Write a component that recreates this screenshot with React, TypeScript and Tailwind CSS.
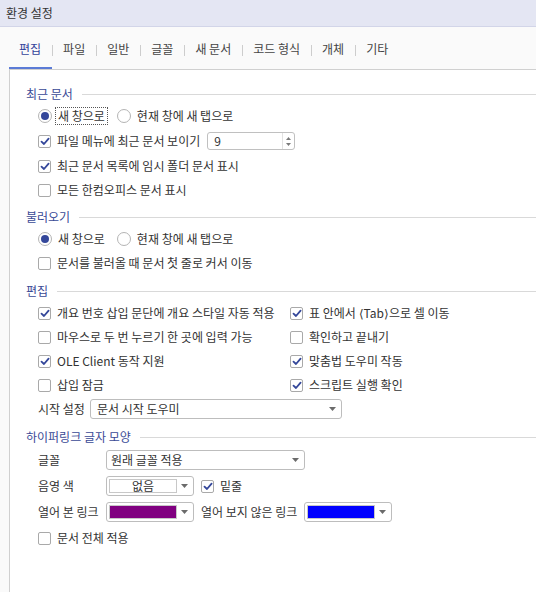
import React from "react";

const font = { fontFamily: '"Noto Sans CJK KR", "Noto Sans", sans-serif' };

function Check({ checked }: { checked?: boolean }) {
  return (
    <span className="w-[13px] h-[13px] shrink-0 border border-[#a9a9a9] rounded-[2px] bg-white flex items-center justify-center">
      {checked && (
        <svg width="10" height="9" viewBox="0 0 10 9">
          <path d="M1.5 4.6 L4 7 L8.6 1.6" fill="none" stroke="#34479a" strokeWidth="1.8" strokeLinecap="round" strokeLinejoin="round" />
        </svg>
      )}
    </span>
  );
}

function Radio({ checked }: { checked?: boolean }) {
  return (
    <span className="w-[14px] h-[14px] shrink-0 border border-[#b4b4b4] rounded-full bg-white flex items-center justify-center">
      {checked && <span className="w-[8px] h-[8px] rounded-full bg-[#34479a]" />}
    </span>
  );
}

function CheckItem({ checked, label }: { checked?: boolean; label: string }) {
  return (
    <div className="flex items-center gap-[6px]">
      <Check checked={checked} />
      <span className="whitespace-nowrap">{label}</span>
    </div>
  );
}

function Heading({ title, className = "" }: { title: string; className?: string }) {
  return (
    <div className={"h-[20px] flex items-center pl-[16px] " + className}>
      <span className="text-[#3a4a96] whitespace-nowrap">{title}</span>
      <span className="flex-1 h-px bg-[#d9d9d9] ml-[9px]" />
    </div>
  );
}

function Arrow() {
  return (
    <svg width="7" height="4" viewBox="0 0 7 4" className="shrink-0">
      <path d="M0 0 H7 L3.5 4 Z" fill="#6b6b6b" />
    </svg>
  );
}

function ColorCombo({ color, text }: { color: string; text?: string }) {
  return (
    <div className="w-[88px] h-[20px] shrink-0 border border-[#bdbdbd] rounded-[3px] bg-white flex items-center pl-[2px] pr-[5px]">
      <div
        className="w-[68px] h-[14px] border border-[#c8c8c8] flex items-center justify-center text-[#333]"
        style={{ backgroundColor: color }}
      >
        {text}
      </div>
      <div className="flex-1" />
      <Arrow />
    </div>
  );
}

const tabs = ["편집", "파일", "일반", "글꼴", "새 문서", "코드 형식", "개체", "기타"];

export default function App() {
  return (
    <div
      className="w-[536px] h-[592px] overflow-hidden bg-[#fafafa] flex flex-col text-[12px] text-[#333333] leading-none"
      style={font}
    >
      {/* Title bar */}
      <div className="h-[27px] shrink-0 bg-[#e4e6f3] border-b border-[#d2d5e8] flex items-center pl-[6px] text-[#333]">
        환경 설정
      </div>

      {/* Tabs */}
      <div className="h-[42px] shrink-0 flex items-stretch pl-[9px]">
        {tabs.map((t, i) => (
          <React.Fragment key={t}>
            {i > 0 && <span className="self-center mt-[4px] w-px h-[11px] bg-[#cdcdcd]" />}
            <div
              className={
                "flex items-center pt-[4px] pl-[10px] pr-[11px] border-b-2 " +
                (i === 0 ? "border-[#5b7bd6] text-[#34449a]" : "border-transparent text-[#444]")
              }
            >
              {t}
            </div>
          </React.Fragment>
        ))}
      </div>

      {/* Panel */}
      <div className="flex-1 ml-[9px] bg-white border-t border-l border-[#d0d0d0] pt-[14px]">
        <Heading title="최근 문서" />
        <div className="pl-[28px]">
          <div className="h-[24px] flex items-center">
            <Radio checked />
            <span className="ml-[3px] px-[2px] py-[2px] border border-dotted border-[#555]">새 창으로</span>
            <span className="ml-[9px] flex items-center gap-[6px]">
              <Radio />
              <span>현재 창에 새 탭으로</span>
            </span>
          </div>
          <div className="h-[26px] flex items-center">
            <CheckItem checked label="파일 메뉴에 최근 문서 보이기" />
            <div className="ml-[7px] w-[88px] h-[18px] border border-[#c0c0c0] rounded-[3px] flex items-center">
              <span className="pl-[6px] flex-1">9</span>
              <div className="w-[12px] h-full border-l border-[#e2e2e2] flex flex-col items-center justify-center gap-[3px]">
                <svg width="5" height="3" viewBox="0 0 5 3"><path d="M0 3 H5 L2.5 0 Z" fill="#7a7a7a" /></svg>
                <svg width="5" height="3" viewBox="0 0 5 3"><path d="M0 0 H5 L2.5 3 Z" fill="#7a7a7a" /></svg>
              </div>
            </div>
          </div>
          <div className="h-[24px] flex items-center">
            <CheckItem checked label="최근 문서 목록에 임시 폴더 문서 표시" />
          </div>
          <div className="h-[24px] flex items-center">
            <CheckItem label="모든 한컴오피스 문서 표시" />
          </div>
        </div>

        <Heading title="불러오기" className="mt-[5px]" />
        <div className="pl-[28px]">
          <div className="h-[24px] flex items-center">
            <Radio checked />
            <span className="ml-[3px] px-[2px] py-[2px] border border-dotted border-transparent">새 창으로</span>
            <span className="ml-[9px] flex items-center gap-[6px]">
              <Radio />
              <span>현재 창에 새 탭으로</span>
            </span>
          </div>
          <div className="h-[24px] flex items-center">
            <CheckItem label="문서를 불러올 때 문서 첫 줄로 커서 이동" />
          </div>
        </div>

        <Heading title="편집" className="mt-[6px]" />
        <div className="pl-[28px]">
          <div className="grid grid-cols-[252px_1fr]">
            <div className="h-[24px] flex items-center"><CheckItem checked label="개요 번호 삽입 문단에 개요 스타일 자동 적용" /></div>
            <div className="h-[24px] flex items-center"><CheckItem checked label="표 안에서 ⟨Tab⟩으로 셀 이동" /></div>
            <div className="h-[24px] flex items-center"><CheckItem label="마우스로 두 번 누르기 한 곳에 입력 가능" /></div>
            <div className="h-[24px] flex items-center"><CheckItem label="확인하고 끝내기" /></div>
            <div className="h-[24px] flex items-center"><CheckItem checked label="OLE Client 동작 지원" /></div>
            <div className="h-[24px] flex items-center"><CheckItem checked label="맞춤법 도우미 작동" /></div>
            <div className="h-[24px] flex items-center"><CheckItem label="삽입 잠금" /></div>
            <div className="h-[24px] flex items-center"><CheckItem checked label="스크립트 실행 확인" /></div>
          </div>
          <div className="h-[24px] flex items-center">
            <span className="w-[52px] whitespace-nowrap">시작 설정</span>
            <div className="w-[252px] h-[20px] border border-[#bdbdbd] rounded-[3px] flex items-center pl-[6px] pr-[5px]">
              <span className="flex-1">문서 시작 도우미</span>
              <Arrow />
            </div>
          </div>
        </div>

        <Heading title="하이퍼링크 글자 모양" className="mt-[6px]" />
        <div className="pl-[28px]">
          <div className="h-[26px] flex items-center">
            <span className="w-[68px] whitespace-nowrap">글꼴</span>
            <div className="w-[199px] h-[20px] border border-[#bdbdbd] rounded-[3px] flex items-center pl-[4px] pr-[5px]">
              <span className="flex-1">원래 글꼴 적용</span>
              <Arrow />
            </div>
          </div>
          <div className="h-[26px] flex items-center">
            <span className="w-[68px] whitespace-nowrap">음영 색</span>
            <ColorCombo color="#ffffff" text="없음" />
            <span className="ml-[7px]"><CheckItem checked label="밑줄" /></span>
          </div>
          <div className="h-[26px] flex items-center">
            <span className="w-[68px] whitespace-nowrap">열어 본 링크</span>
            <ColorCombo color="#800080" />
            <span className="ml-[7px] w-[103px] whitespace-nowrap">열어 보지 않은 링크</span>
            <ColorCombo color="#0000ff" />
          </div>
          <div className="h-[26px] flex items-center">
            <CheckItem label="문서 전체 적용" />
          </div>
        </div>
      </div>
    </div>
  );
}
